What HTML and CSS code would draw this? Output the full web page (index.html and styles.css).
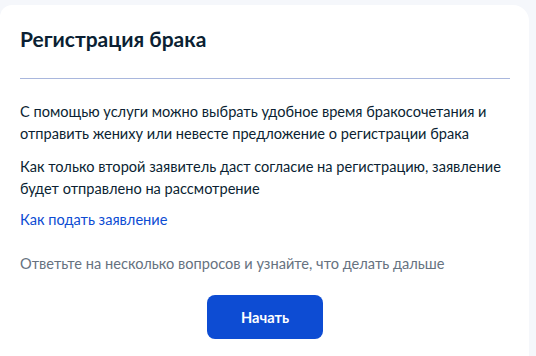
FILE: index.html
```html
<!DOCTYPE html>
<html lang="ru">
<head>
    <meta charset="utf-8">
    <title>Регистрация брака</title>
    <meta name="viewport" content="width=device-width, initial-scale=1">
    <link rel="stylesheet" href="styles.css">
</head>
<body>
    <div class="card">
        <h2 class="card-title">Регистрация брака</h2>
        <hr class="divider">
        <p class="text">С помощью услуги можно выбрать удобное время бракосочетания и отправить жениху или невесте предложение о регистрации брака</p>
        <p class="text text-last">Как только второй заявитель даст согласие на регистрацию, заявление будет отправлено на рассмотрение</p>
        <p class="more"><a href="#" class="link">Как подать заявление</a></p>
        <p class="hint">Ответьте на несколько вопросов и узнайте, что делать дальше</p>
        <div class="actions">
            <button class="btn">Начать</button>
        </div>
    </div>
</body>
</html>
```

FILE: styles.css
```css
html, body {
    margin: 0;
    padding: 0;
    background-color: #f5f7fb;
}

body {
    padding: 5px 7px 0 0;
    font-family: Lato, "Noto Sans", sans-serif;
    color: #0b1f33;
}

.card {
    background-color: #ffffff;
    border-radius: 12px 16px 0 0;
    padding: 20px 19px 30px 20px;
    min-height: 360px;
    box-sizing: border-box;
}

.card-title {
    margin: 0;
    font-size: 21px;
    line-height: 28px;
    font-weight: 700;
}

.divider {
    margin: 25px 0 22px;
    border: 0;
    height: 1px;
    background-color: #a9b7dd;
}

.text {
    margin: 0 0 11px;
    font-size: 14.6px;
    line-height: 22px;
}

.text-last {
    margin-bottom: 9px;
}

.more {
    margin: 0;
    font-size: 14.6px;
    line-height: 22px;
}

.link {
    color: #0d4cd3;
    text-decoration: none;
}

.hint {
    margin: 22px 0 20px;
    font-size: 14.6px;
    line-height: 22px;
    color: #66727f;
}

.actions {
    display: flex;
    justify-content: center;
}

.btn {
    width: 116px;
    height: 44px;
    border: 0;
    border-radius: 8px;
    background-color: #0d4cd3;
    color: #ffffff;
    font-family: Lato, "Noto Sans", sans-serif;
    font-size: 14.6px;
    font-weight: 700;
    cursor: pointer;
}
```
